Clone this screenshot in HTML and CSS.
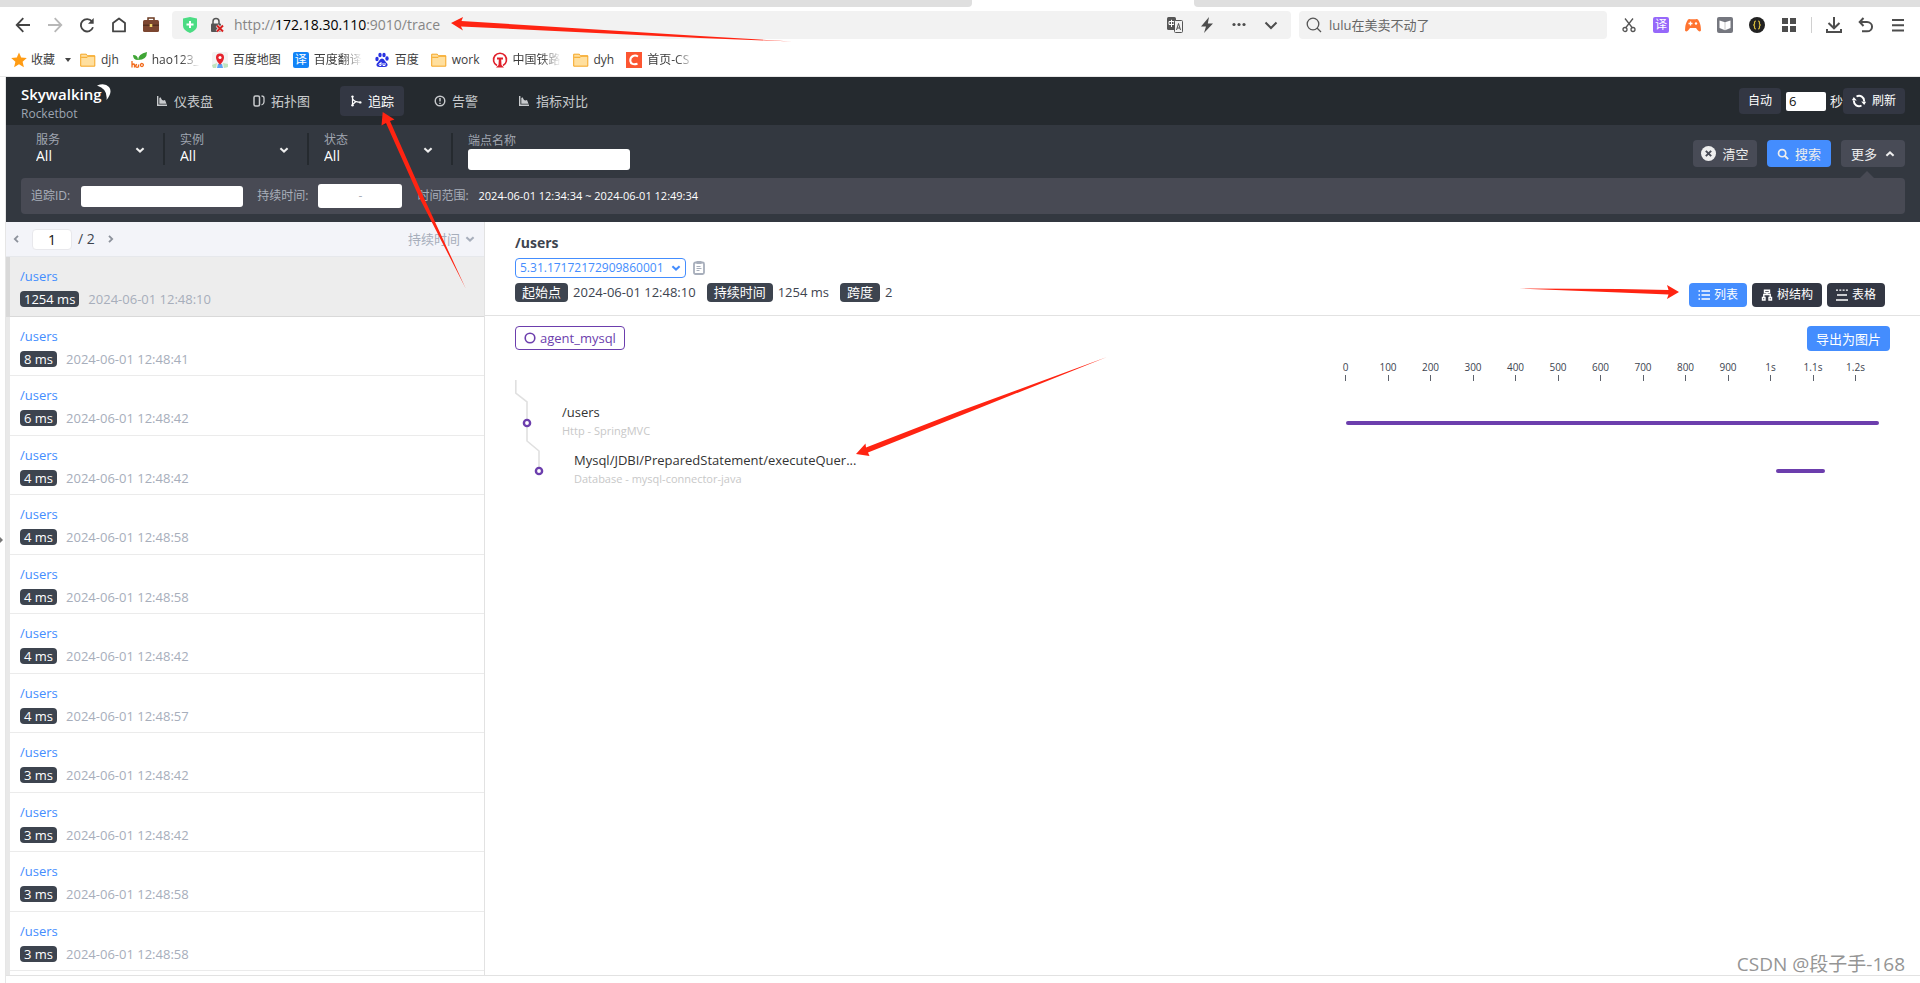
FILE: index.html
```html
<!DOCTYPE html>
<html lang="zh-CN">
<head>
<meta charset="utf-8">
<title>Skywalking Rocketbot - 追踪</title>
<link rel="stylesheet" href="styles.css">
</head>
<body>
<svg class="defs" aria-hidden="true">
  <symbol id="i-folder" viewBox="0 0 16 16"><path d="M.7 2.2h5.6l1.2 1.6h7.3v10.4H.7z" fill="#ffdf9e" stroke="#f5a623"/><path d="M1.2 5.3h6l1.2-1.2h6.4" fill="none" stroke="#f5a623"/></symbol>
  <symbol id="i-down" viewBox="0 0 10 10"><path d="M1.4 3.2 5 6.6l3.6-3.4" fill="none" stroke="currentColor" stroke-width="2"/></symbol>
  <symbol id="i-chart" viewBox="0 0 12 12"><path d="M1 1h1.400v8.600H11V11H1zM3.300 8.700V3l1.200-.7L6 5l1.500.6L9 5l1.500 3.700z" fill="currentColor"/></symbol>
</svg>

<header class="browser">
  <div class="tabs"><span class="tab-bg tab-left"></span><span class="tab-active"></span><span class="tab-bg tab-right"></span></div>
  <div class="toolbar">
    <nav class="tools-left">
      <button aria-label="后退"><svg viewBox="0 0 16 16"><path d="M15 8H2M8.300 1.200 1.700 8l6.600 6.800" fill="none" stroke="#444" stroke-width="1.800"/></svg></button>
      <button aria-label="前进"><svg viewBox="0 0 16 16"><path d="M1 8h13M7.700 1.200 14.300 8l-6.600 6.800" fill="none" stroke="#b8b8b8" stroke-width="1.800"/></svg></button>
      <button aria-label="刷新页面"><svg viewBox="0 0 16 16"><path d="M14 10.300A6.200 6.200 0 1 1 13 4.400" fill="none" stroke="#444" stroke-width="1.800"/><path d="M14.700 1v5.700H9z" fill="#444"/></svg></button>
      <button aria-label="主页"><svg viewBox="0 0 16 16"><path d="M2 14.400V6L8 1.500 14 6v8.400z" fill="none" stroke="#444" stroke-width="1.800" stroke-linejoin="round"/></svg></button>
      <button aria-label="工具箱"><svg viewBox="0 0 16 16"><path d="M5 3V1h6v2" fill="none" stroke="#6b3a22" stroke-width="1.500"/><rect y="3" width="16" height="12" rx="1.500" fill="#7c4630"/><path d="M0 7.500h16V9H0z" fill="#57301f"/><rect x="6.700" y="7" width="2.600" height="3" fill="#f1d36c"/></svg></button>
    </nav>
    <div class="omnibox">
      <svg class="i16" viewBox="0 0 16 16"><path d="M1 1.500 8 0l7 1.500V9q0 4-7 7-7-3-7-7z" fill="#4bdc83"/><path d="M8 4v7M4.500 7.500h7" stroke="#fff" stroke-width="2"/></svg>
      <svg class="i16 lock" viewBox="0 0 16 16"><path d="M4 7V4.500a3 3 0 0 1 6 0V7" fill="none" stroke="#555" stroke-width="1.500"/><rect x="2" y="6.500" width="10" height="8.500" rx="1" fill="#555"/><path d="m8 8.500 6 6m0-6-6 6" stroke="#f2f2f2" stroke-width="3.500"/><path d="m8 8.500 6 6m0-6-6 6" stroke="#d8201f" stroke-width="2"/></svg>
      <div class="url">http://<b>172.18.30.110</b>:9010/trace</div>
      <button aria-label="翻译"><svg viewBox="0 0 16 16"><rect width="9" height="13" rx="1.500" fill="#555"/><path d="M2 4.500h5v3H2zM4.500 2.800V10" fill="none" stroke="#fff"/><rect x="7.500" y="3.500" width="8" height="12" rx="1" fill="#f2f2f2" stroke="#555"/><path d="m9.500 13 2-6.500 2 6.500M10 11h3" fill="none" stroke="#555"/></svg></button>
      <button aria-label="极速模式"><svg viewBox="0 0 16 16"><path d="M10 0 2 9.500h5L5 16l9-9.500H8.800z" fill="#4d4d4d"/></svg></button>
      <button aria-label="更多选项"><svg viewBox="0 0 16 16"><g fill="#4d4d4d"><circle cx="3" cy="7.500" r="1.600"/><circle cx="8" cy="7.500" r="1.600"/><circle cx="13" cy="7.500" r="1.600"/></g></svg></button>
      <button aria-label="展开"><svg viewBox="0 0 16 16"><path d="m2.500 5.500 5.500 5.500 5.500-5.500" fill="none" stroke="#4d4d4d" stroke-width="2"/></svg></button>
    </div>
    <div class="searchbox">
      <svg class="i16" viewBox="0 0 16 16"><circle cx="7" cy="7" r="5.800" fill="none" stroke="#555" stroke-width="1.300"/><path d="m11 11 4 4" stroke="#555" stroke-width="1.300"/></svg>
      <input type="text" aria-label="搜索" value="lulu在美卖不动了">
    </div>
    <div class="tools-right">
      <button aria-label="截图"><svg viewBox="0 0 16 16"><path d="m4 1.500 7.500 9.500M12 1.500 4.500 11" fill="none" stroke="#555" stroke-width="1.300"/><circle cx="4" cy="12.500" r="2" fill="none" stroke="#555" stroke-width="1.300"/><circle cx="12" cy="12.500" r="2" fill="none" stroke="#555" stroke-width="1.300"/></svg></button>
      <button aria-label="译"><span class="yi yi-purple">译</span></button>
      <button aria-label="游戏"><svg viewBox="0 0 16 16"><path d="M3 2.500q1-.8 2.500-.3h5q1.500-.5 2.500.3 3 4.500 3 11-1.500 2-3.500-.5l-1.500-2H5l-1.500 2Q1.500 15.500 0 13.500q0-6.500 3-11z" fill="#ff7430"/><path d="M5.500 4.500v4m-2-2h4" stroke="#fff" stroke-width="1.300"/><circle cx="11" cy="6.500" r="1.200" fill="#fff"/></svg></button>
      <button aria-label="阅读"><svg viewBox="0 0 16 16"><rect width="16" height="16" rx="2" fill="#75777f"/><path d="M2.500 3.500 8 5.200l5.500-1.700V11L8 13.300 2.500 11z" fill="#fff"/><path d="M8 5v8" stroke="#c8c8c8"/></svg></button>
      <button aria-label="脚本"><svg viewBox="0 0 16 16"><circle cx="8" cy="8" r="8" fill="#222"/><path d="M7 4q-1.500 0-1.500 1.500v1.500L4.700 8l.8 1v1.500Q5.500 12 7 12M9 4q1.500 0 1.500 1.500v1.500l.8 1-.8 1v1.500Q10.500 12 9 12" fill="none" stroke="#d9bd3c" stroke-width="1.200"/></svg></button>
      <button aria-label="应用"><svg viewBox="0 0 16 16"><path d="M1 1h6v6H1zM9 1h6v6H9zM1 9h6v6H1zM9 9h6v6H9z" fill="#4d4d4d"/></svg></button>
      <span class="sep"></span>
      <button aria-label="下载"><svg viewBox="0 0 16 16"><path d="M8 0v11M2.500 6 8 11.300 13.500 6M1 12v3h14v-3" fill="none" stroke="#4d4d4d" stroke-width="2"/></svg></button>
      <button aria-label="撤销"><svg viewBox="0 0 16 16"><path d="M2 5h7a5 4.600 0 0 1 0 9.300H4" fill="none" stroke="#4d4d4d" stroke-width="2"/><path d="M5.500 1 1.700 5l3.800 4" fill="none" stroke="#4d4d4d" stroke-width="2"/></svg></button>
      <button aria-label="菜单"><svg viewBox="0 0 16 16"><path d="M2 3h12M2 8.300h12M2 13.500h12" stroke="#4d4d4d" stroke-width="2"/></svg></button>
    </div>
  </div>
  <nav class="bookmarks">
    <a href="#" class="fav"><svg class="i16" viewBox="0 0 16 16"><path d="m8 .5 2.200 5 5.600.5-4.200 3.700 1.300 5.500L8 12.300l-4.900 2.900 1.300-5.500L.2 6l5.600-.5z" fill="#ff9c14"/></svg><span>收藏</span><svg class="caret" viewBox="0 0 6 4"><path d="M0 0h6L3 4z" fill="#444"/></svg></a>
    <a href="#"><svg class="i16"><use href="#i-folder"/></svg><span>djh</span></a>
    <a href="#"><svg class="i16" viewBox="0 0 16 16"><path d="M7 8Q2 8 2 3q5 0 5 5zM7 8q0-6 9-8 0 8-9 8z" fill="#3fa535"/><path d="M1 9v6.500M1 13q2-2 2.500 0v2.500M6 12.500a1.400 1.400 0 1 0 1.500 1.500v-1.500 3M12 14a1.500 1.500 0 1 0-.1.100" fill="none" stroke="#f26a1b" stroke-width="1.300"/></svg><span class="clip">hao123_</span></a>
    <a href="#"><svg class="i16" viewBox="0 0 16 16"><rect width="16" height="16" rx="2" fill="#f3f3f3"/><path d="M0 13 5 11l-1 5H1zM11 11l5 1v3l-4 1z" fill="#bfe3bd"/><path d="M6 12h4l1 4H5z" fill="#5ba4f5"/><path d="M8 13Q4 8.500 4 5.500a4 4 0 0 1 8 0Q12 8.500 8 13z" fill="#e6222c"/><circle cx="8" cy="5.500" r="1.500" fill="#fff"/></svg><span>百度地图</span></a>
    <a href="#"><span class="yi yi-blue">译</span><span class="clip">百度翻译</span></a>
    <a href="#"><svg class="i16" viewBox="0 0 16 16"><g fill="#2932e1"><ellipse cx="3" cy="7" rx="1.700" ry="2.200"/><ellipse cx="6" cy="3" rx="1.700" ry="2.300"/><ellipse cx="10" cy="3" rx="1.700" ry="2.300"/><ellipse cx="13" cy="6.500" rx="1.700" ry="2.200"/><path d="M8 6.500q2 0 3 2.500l2.500 3q.5 3-3 3h-5q-3.500 0-3-3L5 9q1-2.500 3-2.500z"/></g><path d="M7 10v3.500H5.500q-1-1.500 0-2H7M9 11v2.500h2V11" fill="none" stroke="#fff"/></svg><span>百度</span></a>
    <a href="#"><svg class="i16"><use href="#i-folder"/></svg><span>work</span></a>
    <a href="#"><svg class="i16" viewBox="0 0 16 16"><path d="M5 13.500A6.500 6.500 0 1 1 11 13.500" fill="none" stroke="#e0202b" stroke-width="1.600"/><path d="M5 5.500h6v2H9.200l.3 5.500 2.500 2.500H4L6.500 13l.3-5.500H5z" fill="#e0202b"/></svg><span class="clip">中国铁路</span></a>
    <a href="#"><svg class="i16"><use href="#i-folder"/></svg><span>dyh</span></a>
    <a href="#"><svg class="i16" viewBox="0 0 16 16"><path d="M0 0h16v16H0z" fill="#fc5531"/><path d="M12 4.500Q9.500 3 7 4 4 5.500 4.300 9q.7 4.500 7.200 2.700" fill="none" stroke="#fff" stroke-width="2"/></svg><span class="clip">首页-CS</span></a>
  </nav>
</header>

<div class="viewport">
  <aside class="gutter"><svg viewBox="0 0 4 8"><path d="M0 0v8l4-4z" fill="#777"/></svg></aside>
  <div class="app">
    <header class="topbar">
      <div class="logo"><div class="logo-name">Skywalking<svg viewBox="0 0 14 16"><path d="M0 1.500Q8-1.500 12 3q4 5-2.500 13Q11 5 0 1.500z" fill="#fff"/></svg></div><div class="logo-sub">Rocketbot</div></div>
      <nav class="menu">
        <a href="#"><svg><use href="#i-chart"/></svg>仪表盘</a>
        <a href="#"><svg viewBox="0 0 12 12"><rect x="1" y="1" width="5.500" height="10" rx="1.500" fill="none" stroke="currentColor" stroke-width="1.500"/><path d="M8.500 1q2.500 0 2.500 2v4q0 2-2.500 3" fill="none" stroke="currentColor" stroke-width="1.300"/></svg>拓扑图</a>
        <a href="#" class="active"><svg viewBox="0 0 12 12"><path d="M2.500 1.500v9M2.500 3.500q1.500 3.500 7.500 3.800M2.500 9.500 6 6.500" fill="none" stroke="currentColor" stroke-width="1.200"/><circle cx="2.500" cy="1.600" r="1.200" fill="currentColor"/><circle cx="2.500" cy="10.300" r="1.200" fill="currentColor"/><circle cx="10.300" cy="7.400" r="1.200" fill="currentColor"/></svg>追踪</a>
        <a href="#"><svg viewBox="0 0 12 12"><circle cx="6" cy="6" r="4.800" fill="none" stroke="currentColor" stroke-width="1.400"/><path d="M6 3v3.500M6 7.700V9" stroke="currentColor" stroke-width="1.500"/></svg>告警</a>
        <a href="#"><svg><use href="#i-chart"/></svg>指标对比</a>
      </nav>
      <div class="refresh">
        <button class="btn-top">自动</button>
        <input id="sec" type="text" value="6"><label for="sec">秒</label>
        <button class="btn-top"><svg viewBox="0 0 14 14"><path d="M4.500 2.500A5 5 0 0 1 12 7.500M9.500 11.500A5 5 0 0 1 2 6.500" fill="none" stroke="currentColor" stroke-width="1.900"/><path d="m9.200 7.500 5 .3-2 3.200zM4.800 6.500-.2 6.200l2-3.200z" fill="currentColor"/></svg>刷新</button>
      </div>
    </header>

    <section class="filters">
      <div class="filter-row">
        <div class="pick"><label for="svc">服务</label><select id="svc"><option>All</option></select><svg><use href="#i-down"/></svg></div>
        <div class="pick"><label for="ins">实例</label><select id="ins"><option>All</option></select><svg><use href="#i-down"/></svg></div>
        <div class="pick"><label for="st">状态</label><select id="st"><option>All</option></select><svg><use href="#i-down"/></svg></div>
        <div class="endpoint"><label for="ep">端点名称</label><input id="ep" type="text"></div>
        <div class="actions">
          <button class="btn"><svg class="wide" viewBox="0 0 14 14"><circle cx="7" cy="7" r="7" fill="#eee"/><path d="m4.500 4.500 5 5m0-5-5 5" stroke="#484b56" stroke-width="1.800"/></svg>清空</button>
          <button class="btn primary"><svg viewBox="0 0 14 14"><circle cx="6" cy="6" r="4.200" fill="none" stroke="currentColor" stroke-width="2"/><path d="m9 9 4 4" stroke="currentColor" stroke-width="2.200"/></svg>搜索</button>
          <button class="btn more">更多<svg viewBox="0 0 10 10"><path d="M1.400 6.800 5 3.400l3.600 3.400" fill="none" stroke="currentColor" stroke-width="2"/></svg></button>
        </div>
      </div>
      <div class="more-panel">
        <label for="tid">追踪ID:</label><input id="tid" class="tid" type="text">
        <label for="dmin">持续时间:</label>
        <div class="range"><input id="dmin" type="text"><span>-</span><input type="text" aria-label="最大持续时间"></div>
        <span class="lbl">时间范围:</span><span class="time">2024-06-01 12:34:34 ~ 2024-06-01 12:49:34</span>
      </div>
    </section>

    <main class="main">
      <section class="list">
        <div class="pager">
          <button aria-label="上一页"><svg viewBox="0 0 6 8"><path d="M5 .8 1.800 4 5 7.200" fill="none" stroke="currentColor" stroke-width="1.800"/></svg></button>
          <input type="text" aria-label="页码" value="1"><span>/ 2</span>
          <button aria-label="下一页"><svg viewBox="0 0 6 8"><path d="M1 .8 4.200 4 1 7.200" fill="none" stroke="currentColor" stroke-width="1.800"/></svg></button>
          <div class="sort"><select aria-label="排序"><option>持续时间</option></select><svg><use href="#i-down"/></svg></div>
        </div>
        <ul>
          <li class="on"><a href="#">/users</a><p><b>1254 ms</b><time>2024-06-01 12:48:10</time></p></li>
          <li><a href="#">/users</a><p><b>8 ms</b><time>2024-06-01 12:48:41</time></p></li>
          <li><a href="#">/users</a><p><b>6 ms</b><time>2024-06-01 12:48:42</time></p></li>
          <li><a href="#">/users</a><p><b>4 ms</b><time>2024-06-01 12:48:42</time></p></li>
          <li><a href="#">/users</a><p><b>4 ms</b><time>2024-06-01 12:48:58</time></p></li>
          <li><a href="#">/users</a><p><b>4 ms</b><time>2024-06-01 12:48:58</time></p></li>
          <li><a href="#">/users</a><p><b>4 ms</b><time>2024-06-01 12:48:42</time></p></li>
          <li><a href="#">/users</a><p><b>4 ms</b><time>2024-06-01 12:48:57</time></p></li>
          <li><a href="#">/users</a><p><b>3 ms</b><time>2024-06-01 12:48:42</time></p></li>
          <li><a href="#">/users</a><p><b>3 ms</b><time>2024-06-01 12:48:42</time></p></li>
          <li><a href="#">/users</a><p><b>3 ms</b><time>2024-06-01 12:48:58</time></p></li>
          <li><a href="#">/users</a><p><b>3 ms</b><time>2024-06-01 12:48:58</time></p></li>
        </ul>
      </section>

      <section class="detail">
        <header class="detail-head">
          <div class="info">
            <h1>/users</h1>
            <div class="trace-id">
              <div class="idbox"><select aria-label="追踪ID"><option>5.31.17172172909860001</option></select><svg><use href="#i-down"/></svg></div>
              <button aria-label="复制"><svg viewBox="0 0 12 14"><rect x="1" y="1.500" width="10" height="11.500" rx="1.500" fill="none" stroke="#a7aebb" stroke-width="1.800"/><path d="M3.500 0h5v3h-5z" fill="#a7aebb"/><path d="M3.500 5.500h4M3.500 7.500h5M3.500 9.500h3" stroke="#a7aebb"/></svg></button>
            </div>
            <div class="facts"><b>起始点</b><span>2024-06-01 12:48:10</span><b>持续时间</b><span>1254 ms</span><b>跨度</b><span>2</span></div>
          </div>
          <div class="views">
            <button class="on"><svg viewBox="0 0 12 12"><path d="M3.500 2H12M3.500 6H12M3.500 10H12M.5 2h1.500M.5 6h1.500M.5 10h1.500" stroke="currentColor" stroke-width="1.400"/></svg>列表</button>
            <button><svg viewBox="0 0 12 12"><path d="M3.500 1.200h5v2.300h-5zM6 3.500v2M2.800 8.500v-3h6.400v3M1.500 8.500H4V11H1.500zM8 8.500h2.500V11H8z" fill="none" stroke="currentColor" stroke-width="1.400"/></svg>树结构</button>
            <button><svg viewBox="0 0 12 12"><path d="M0 1.200h12" stroke="currentColor" stroke-dasharray="2 1.300" stroke-width="1.200"/><path d="M1 6h10M0 11h12" stroke="currentColor" stroke-width="1.500"/></svg>表格</button>
          </div>
        </header>
        <div class="chart">
          <div class="chart-bar"><button class="agent"><svg viewBox="0 0 12 12"><circle cx="6" cy="6" r="4.800" fill="none" stroke="currentColor" stroke-width="1.600"/></svg>agent_mysql</button><button class="btn-export">导出为图片</button></div>
          <div class="spans">
            <div class="tree">
              <svg class="branches" viewBox="0 0 32 110"><g fill="none" stroke="#e0e0e0" stroke-width="1.600"><path d="M.8 10v13L12 32v17M12 57v14l12 10v16"/></g><g fill="#fff" stroke="#6c3ead" stroke-width="2.400"><circle cx="12" cy="53" r="3.100"/><circle cx="24" cy="101" r="3.100"/></g></svg>
              <div class="span-names">
                <div class="span-item"><strong>/users</strong><small>Http - SpringMVC</small></div>
                <div class="span-item child"><strong>Mysql/JDBI/PreparedStatement/executeQuer...</strong><small>Database - mysql-connector-java</small></div>
              </div>
            </div>
            <div class="timeline">
              <ol class="axis"><li>0</li><li>100</li><li>200</li><li>300</li><li>400</li><li>500</li><li>600</li><li>700</li><li>800</li><li>900</li><li>1s</li><li>1.1s</li><li>1.2s</li></ol>
              <div class="track"><i style="width:100%"></i></div>
              <div class="track"><i style="margin-left:80.700%;width:9.200%"></i></div>
            </div>
          </div>
        </div>
      </section>
    </main>
  </div>
</div>

<svg class="marks" width="1920" height="983" viewBox="0 0 1920 983" aria-hidden="true">
  <g fill="#ff2412">
    <path d="M451 23l12-6-1.500 4L700 36l92 5.500L700 38 461 26.500l2 4z"/>
    <path d="M382.700 112l11.800 7.500-4.500 1.500 34 77 41.500 90L420 199l-34-76-4.500 2.500z"/>
    <path d="M856 454l9.500-10.500.5 4L960 411l147-54L962 415 868 452.500l1.500 3.500z"/>
    <path d="M1679 292l-12 7 1.500-4.500-49-2-100-4 100 .5 49 1-1.500-5z"/>
  </g>
</svg>
<div class="watermark">CSDN @段子手-168</div>
</body>
</html>
```
FILE: styles.css
```css
* { box-sizing: border-box; }
html, body { height: 100%; }
body {
  margin: 0;
  display: flex;
  flex-direction: column;
  overflow: hidden;
  background: #fff;
  color: #3d444f;
  font: 13px/20px "Open Sans", "Noto Sans CJK SC", sans-serif;
}
button, input, select { font: inherit; color: inherit; border: 0; padding: 0; margin: 0; background: none; }
select { appearance: none; }
a { text-decoration: none; color: inherit; }
ul, ol, p, h1 { margin: 0; padding: 0; list-style: none; }
svg { flex: none; display: block; }
.defs { position: absolute; width: 0; height: 0; }
.i16 { width: 16px; height: 16px; }

/* browser chrome */
.browser { flex: none; border-bottom: 1px solid #e8e8e8; }
.tabs { display: flex; height: 7px; background: #fff; }
.tab-bg { background: #dfdfdf; }
.tab-left { flex: 972; border-bottom-right-radius: 4px; }
.tab-active { flex: 222; }
.tab-right { flex: 726; border-bottom-left-radius: 4px; }
.toolbar { display: flex; align-items: center; padding: 4px 14px 0 15px; height: 32px; }
.toolbar button { width: 16px; height: 16px; flex: none; }
.toolbar button svg { width: 16px; height: 16px; }
.tools-left { display: flex; gap: 16px; margin-right: 13px; }
.omnibox { flex: 1; display: flex; align-items: center; height: 28px; padding: 0 12px 0 10px; gap: 16px; background: #f2f2f2; border-radius: 4px; }
.omnibox .lock { margin-left: -5px; }
.url { flex: 1; margin-left: -7px; font-size: 14px; color: #868686; }
.url b { font-weight: 400; color: #000; }
.searchbox { display: flex; align-items: center; gap: 7px; width: 308px; height: 28px; margin: 0 14px 0 8px; padding: 0 7px; background: #f2f2f2; border-radius: 4px; }
.searchbox input { flex: 1; min-width: 0; color: #666; }
.tools-right { display: flex; align-items: center; gap: 16px; }
.sep { width: 1px; height: 16px; margin: 0 -2px; background: #d0d0d0; }
.yi { display: block; flex: none; width: 16px; height: 16px; border-radius: 2px; color: #fff; font-size: 12px; line-height: 16px; text-align: center; }
.yi-purple { background: #9668fa; }
.yi-blue { background: #1384f7; }
.bookmarks { display: flex; align-items: center; gap: 12px; height: 37px; padding: 5px 11px 0; font-size: 12px; color: #3c3c3c; }
.bookmarks a { display: flex; align-items: center; gap: 4px; white-space: nowrap; }
.bookmarks .fav { margin-right: -3px; }
.bookmarks a + a { gap: 5px; }
.caret { width: 6px; height: 4px; margin-left: 6px; }
.clip { width: 48px; overflow: hidden; mask-image: linear-gradient(90deg, #000 60%, transparent); }

/* page frame */
.viewport { flex: 1; min-height: 0; display: flex; }
.gutter { width: 6px; display: flex; align-items: center; padding-top: 20px; border-right: 1px solid #e6e6e6; }
.gutter svg { width: 3px; height: 6px; }
.app { flex: 1; min-width: 0; display: flex; flex-direction: column; padding-bottom: 7px; }

/* top bar */
.topbar { flex: none; display: flex; align-items: center; height: 48px; padding: 0 15px; background: #252a2f; color: #c8cacd; }
.logo { width: 125px; padding-top: 4px; }
.logo-name { display: flex; align-items: center; color: #fff; font-size: 15px; font-weight: 600; line-height: 21px; }
.logo-name svg { width: 14px; height: 16px; margin: -6px 0 0 -5px; }
.logo-sub { color: #9da5b2; font-size: 12px; line-height: 17px; }
.menu { display: flex; gap: 20px; flex: 1; }
.menu a { display: flex; align-items: center; gap: 6px; height: 30px; padding: 0 10px; border-radius: 4px; }
.menu svg { width: 12px; height: 12px; }
.menu .active { background: #333743; color: #fff; }
.refresh { display: flex; align-items: center; color: #eee; }
.refresh input { width: 40px; height: 19px; margin: 0 4px 0 5px; padding-left: 3px; background: #fff; color: #111; border-radius: 2px; }
.btn-top { display: flex; align-items: center; gap: 6px; height: 26px; padding: 0 9px; background: #333743; border-radius: 4px; font-size: 12px; color: #fff; }
.btn-top svg { width: 14px; height: 14px; }

/* filters */
.filters { flex: none; padding: 8px 15px; background: #333840; color: #a0a6b1; font-size: 12px; }
.filter-row { display: flex; height: 45px; }
.pick { width: 144px; height: 32px; display: grid; grid-template-columns: 1fr 10px; grid-template-rows: 14px 18px; align-items: center; padding: 0 18px 0 15px; border-right: 2px solid #252a2f; }
.pick label { grid-column: 1; }
.pick select { grid-column: 1; font-size: 14px; line-height: 18px; color: #fff; }
.pick svg { grid-column: 2; grid-row: 1 / 3; width: 10px; height: 10px; margin-top: 2px; color: #eee; }
.endpoint { display: flex; flex-direction: column; padding-left: 15px; }
.endpoint label { line-height: 16px; }
.endpoint input, .tid { width: 162px; height: 21px; background: #fff; border-radius: 3px; }
.actions { display: flex; gap: 10px; margin-left: auto; padding-top: 7px; }
.btn { display: flex; align-items: center; justify-content: center; gap: 6px; width: 64px; height: 27px; border-radius: 4px; background: #484b56; color: #eee; font-size: 13px; }
.btn svg { width: 12px; height: 12px; }
.btn .wide { width: 15px; height: 15px; }
.btn.more { position: relative; gap: 8px; }
.btn.more svg { width: 10px; height: 10px; }
.btn.more::after { content: ""; position: absolute; left: 18px; top: 31px; border: 8px solid transparent; border-top: 0; border-bottom-color: #484a54; }
.primary { background: #448dfe; }
.more-panel { display: flex; align-items: center; height: 36px; padding: 0 10px; background: #484a54; border-radius: 4px; color: #a9afba; }
.more-panel .tid { margin: 0 14px 0 11px; }
.range { display: flex; align-items: center; width: 84px; height: 24px; margin: 0 15px 0 10px; background: #fff; border-radius: 3px; }
.range input { flex: 1; min-width: 0; height: 100%; text-align: center; }
.time { margin-left: 10px; font-size: 11px; color: #fff; }

/* trace list */
.main { flex: 1; min-height: 0; display: flex; border-bottom: 1px solid #e2e2e2; }
.list { flex: none; width: 479px; display: flex; flex-direction: column; border-right: 1px solid #e2e2e2; }
.pager { flex: none; display: flex; align-items: center; height: 35px; padding: 0 9px 0 7px; background: #f3f4f9; border-bottom: 1px solid #e6e8ec; font-size: 14px; }
.pager button { color: #8d929c; }
.pager button svg { width: 6px; height: 8px; }
.pager input { width: 40px; height: 21px; margin: 0 6px 0 13px; border: 1px solid #e8e8ec; border-radius: 4px; background: #fff; text-align: center; color: #111; }
.pager span { margin-right: 13px; }
.sort { display: flex; align-items: center; gap: 4px; margin-left: auto; font-size: 13px; color: #a7aebb; }
.sort svg { width: 10px; height: 10px; }
.list ul { flex: 1; display: flex; flex-direction: column; padding-bottom: 4px; border-left: 4px solid #e9e9e9; }
.list li { flex: 1; padding: 9px 10px 0; border-bottom: 1px solid #ebebeb; }
.list li.on { margin-left: -4px; border-left: 4px solid #d9d9d9; background: #ededed; border-bottom-color: #d9d9d9; }
.list a { display: block; color: #448dfe; font-size: 13px; }
.list p { display: flex; align-items: center; gap: 9px; margin-top: 5px; line-height: 16px; color: #a7aebb; }
.list b { padding: 0 4px; border-radius: 4px; background: #3d444f; color: #fff; font-weight: 400; }

/* trace detail */
.detail { flex: 1; min-width: 0; }
.detail-head { display: flex; justify-content: space-between; align-items: flex-end; height: 94px; padding: 0 35px 8px 30px; border-bottom: 1px solid #e2e2e2; }
.info { align-self: flex-start; padding-top: 11px; }
h1 { font-size: 14px; line-height: 20px; font-weight: 700; }
.trace-id { display: flex; align-items: center; gap: 7px; margin: 5px 0; }
.idbox { display: flex; align-items: center; gap: 7px; height: 20px; padding: 0 4px; border: 1px solid #448dfe; border-radius: 4px; font-size: 12px; color: #448dfe; }
.idbox select { line-height: 18px; }
.idbox svg { width: 10px; height: 10px; }
.trace-id button svg { width: 12px; height: 14px; }
.facts { display: flex; align-items: center; line-height: 19px; }
.facts b { padding: 0 7px; border-radius: 4px; background: #3d444f; color: #fff; font-weight: 400; }
.facts span { margin: 0 11px 0 5px; }
.views { display: flex; gap: 5px; }
.views button { display: flex; align-items: center; gap: 4px; height: 24px; padding: 0 9px; border-radius: 4px; background: #333743; color: #fff; font-size: 12px; }
.views .on { background: #448dfe; }
.views svg { width: 12px; height: 12px; }
.chart { padding: 10px 30px 0; }
.chart-bar { display: flex; justify-content: space-between; }
.agent { display: flex; align-items: center; gap: 4px; height: 24px; padding: 0 8px; border: 1px solid #6c3ead; border-radius: 4px; color: #6c3ead; }
.agent svg { width: 12px; height: 12px; }
.btn-export { height: 25px; padding: 0 9px; border-radius: 4px; background: #448dfe; color: #fff; }
.spans { display: grid; grid-template-columns: 830fr 533fr; padding-right: 11px; margin-top: 9px; }
.tree { display: flex; padding-top: 10px; }
.branches { width: 32px; height: 110px; }
.span-names { padding: 32px 0 0 15px; }
.span-item { height: 48px; }
.span-item.child { margin-left: 12px; }
.span-item strong { display: block; font-weight: 400; font-size: 13px; line-height: 20px; color: #333; }
.span-item small { display: block; font-size: 11px; line-height: 18px; color: #c8c8c8; }
.axis { display: flex; margin-left: calc(100% / -25); height: 61px; font-size: 10px; line-height: 14px; }
.axis li { flex: none; width: calc(100% / 13.05); text-align: center; }
.axis li::after { content: ""; display: block; width: 1px; height: 6px; margin: 1px auto 0; background: #5d626c; }
.track { height: 48px; }
.track i { display: block; height: 4px; border-radius: 2px; background: #6c3ead; }

/* overlays */
.marks { position: absolute; left: 0; top: 0; pointer-events: none; }
.watermark { position: absolute; right: 15px; bottom: 7px; font-size: 19px; line-height: 24px; color: #959595; }
```
